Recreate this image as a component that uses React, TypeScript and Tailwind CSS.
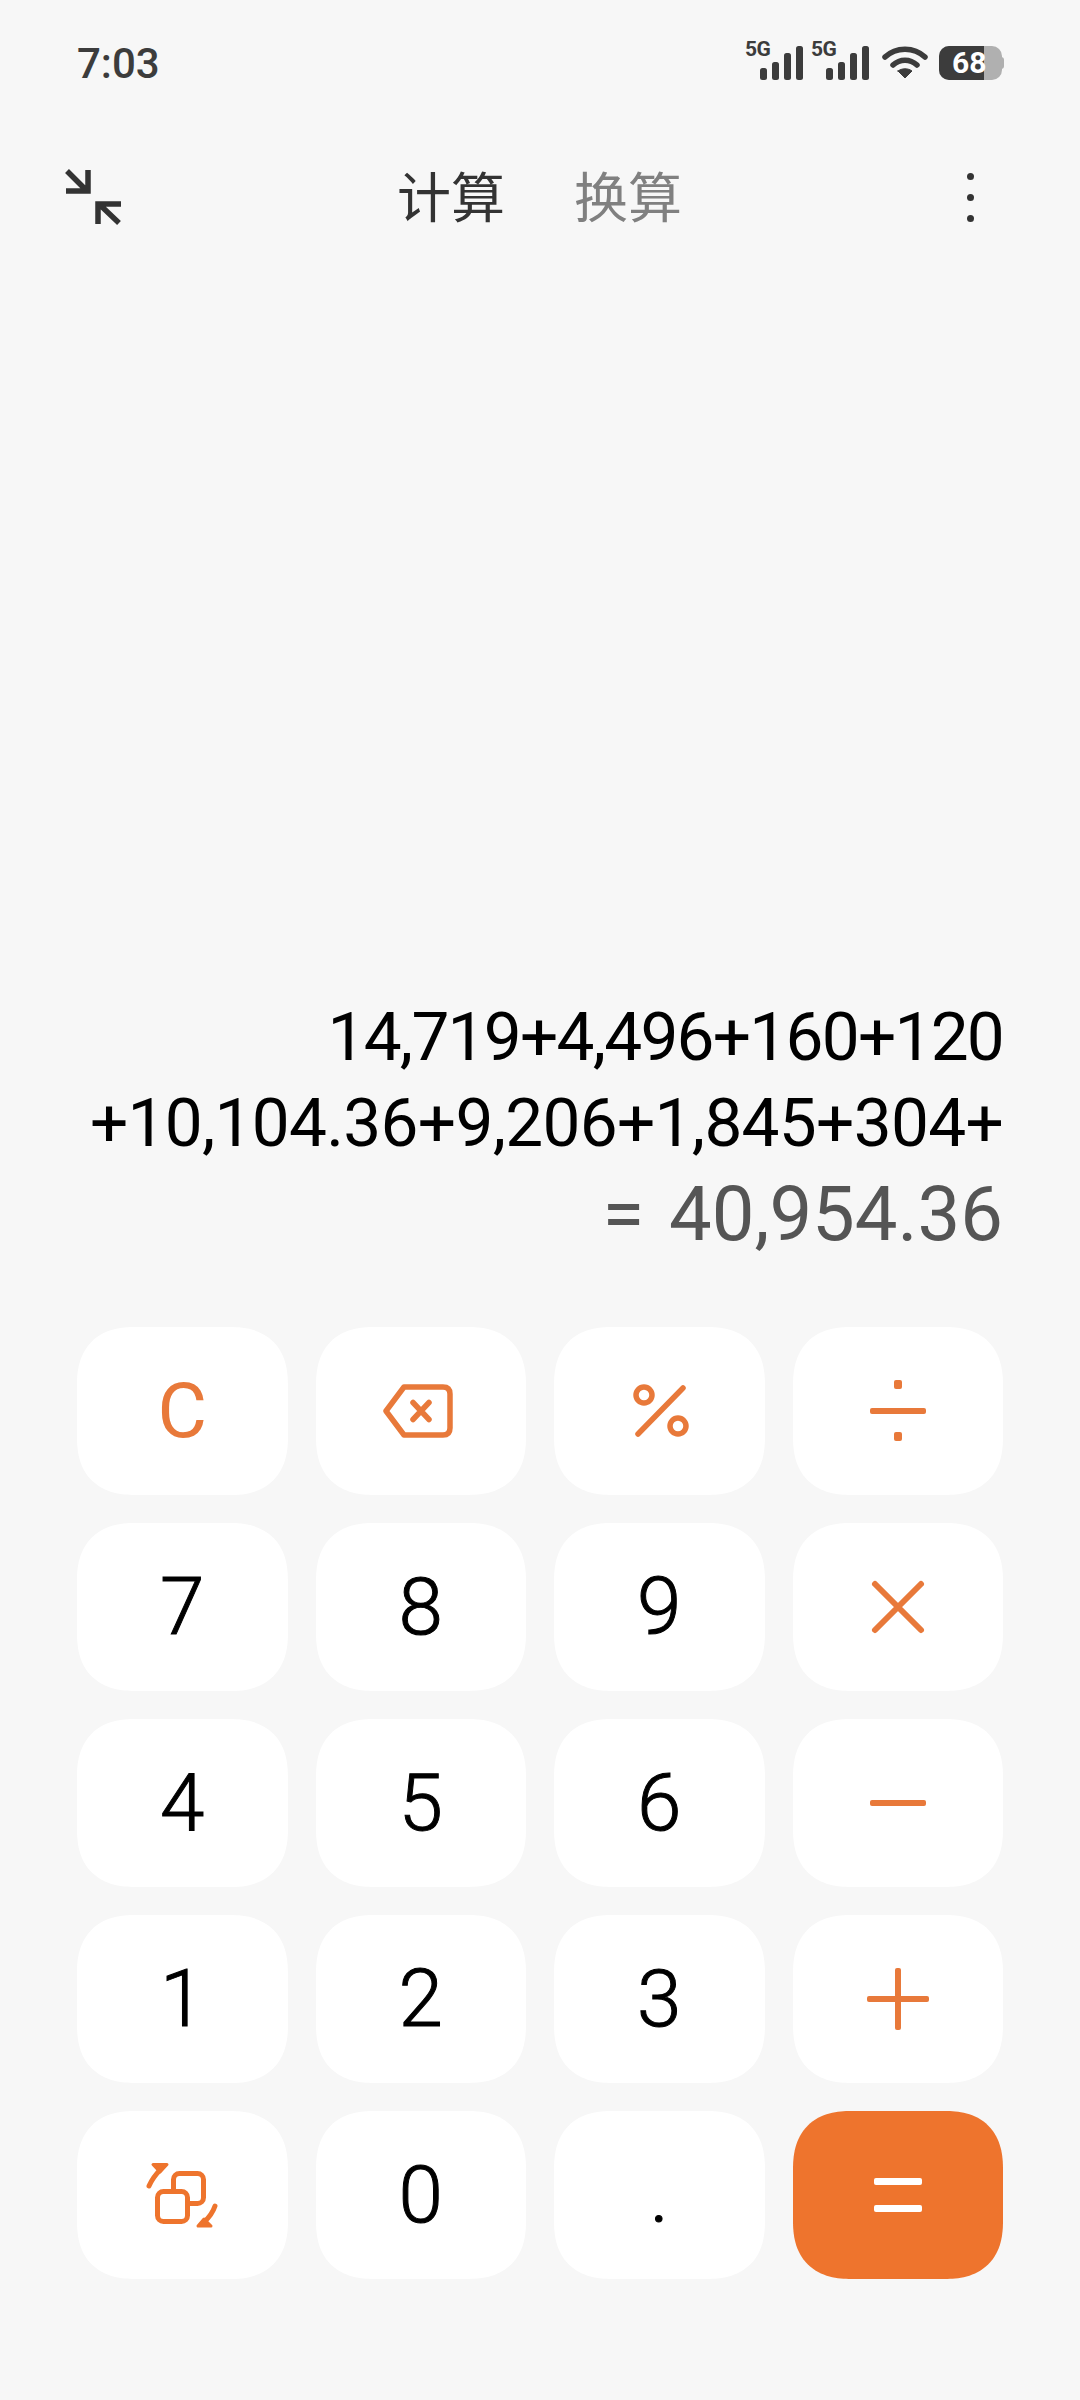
const font = "font-['Roboto','Noto_Sans_CJK_SC',sans-serif]";

function Compress() {
  return (
    <svg width="58" height="56" viewBox="0 0 58 56" fill="none" stroke="#333" strokeWidth="5.5">
      <path d="M3 2 L23 22 M24 1 V22 H2" />
      <path d="M55 54 L35 35 M34 55 V35 H57" />
    </svg>
  );
}

function Signal() {
  return (
    <div className="relative h-[38px] w-[60px]">
      <span className="absolute left-0 top-[-4px] text-[21px] font-bold leading-[22px] tracking-[-0.5px] text-[#3c3c3c]">5G</span>
      <svg width="60" height="38" viewBox="0 0 60 38" fill="#3c3c3c">
        <rect x="15" y="26" width="7" height="12" rx="2.5" />
        <rect x="27" y="20" width="7" height="18" rx="2.5" />
        <rect x="39" y="11" width="7" height="27" rx="2.5" />
        <rect x="51" y="4" width="7" height="34" rx="2.5" />
      </svg>
    </div>
  );
}

function Wifi() {
  return (
    <svg className="mb-[1px]" width="46" height="33" viewBox="0 0 46 33" fill="none" stroke="#3c3c3c" strokeWidth="5.5" strokeLinecap="round">
      <path d="M3 11 C14 0.5 32 0.5 43 11" />
      <path d="M11 19 C18 12.5 28 12.5 35 19" />
      <path d="M16 25 L23 32 L30 25 C26 22 20 22 16 25 Z" fill="#3c3c3c" strokeWidth="1" strokeLinejoin="round" />
    </svg>
  );
}

function Battery() {
  return (
    <div className="relative h-[34px] w-[65px]">
      <div className="h-[34px] w-[63px] overflow-hidden rounded-[10px] bg-[#b0b0b0]">
        <div className="h-full w-[45px] bg-[#3c3c3c]" />
      </div>
      <div className="absolute right-0 top-[11px] h-[12px] w-[3px] rounded-r-sm bg-[#b0b0b0]" />
      <span className="absolute left-[13px] top-0 text-[30px] font-bold leading-[34px] text-white">68</span>
    </div>
  );
}

function Key({ children, className = "bg-white" }: { children: React.ReactNode; className?: string }) {
  return (
    <div className={`flex h-[168px] items-center justify-center rounded-[58px] [corner-shape:superellipse(1.25)] ${className}`}>{children}</div>
  );
}

function Digit({ v }: { v: string }) {
  return (
    <Key>
      <span className="text-[80px] font-light leading-none text-black [-webkit-text-stroke:1px_black]">{v}</span>
    </Key>
  );
}

const orange = "#E8793A";

export default function App() {
  return (
    <div className={`${font} flex h-[2400px] w-[1080px] flex-col bg-[#f7f7f7]`}>
      <div className="mt-[42px] flex h-[38px] items-end justify-between pl-[77px] pr-[76px]">
        <span className="mb-[1px] text-[42px] font-medium leading-[30px] text-[#3c3c3c]">7:03</span>
        <div className="flex items-end">
          <div className="flex gap-[6px]"><Signal /><Signal /></div>
          <div className="ml-[11px] flex"><Wifi /></div>
          <div className="ml-[11px]"><Battery /></div>
        </div>
      </div>

      <div className="mt-[89px] flex h-[56px] items-center pl-[64px] pr-[106px]">
        <Compress />
        <div className="ml-[275px] mt-[5px] flex gap-[69px] text-[54px] leading-none">
          <span className="text-[#333]">计算</span>
          <span className="text-[#808080]">换算</span>
        </div>
        <div className="ml-auto flex flex-col gap-[14px]">
          <div className="h-[7px] w-[7px] rounded-full bg-[#333]" />
          <div className="h-[7px] w-[7px] rounded-full bg-[#333]" />
          <div className="h-[7px] w-[7px] rounded-full bg-[#333]" />
        </div>
      </div>

      <div className="flex flex-1 flex-col justify-end pb-[65px] pr-[77px] text-right">
        <div className="text-[67.5px] leading-[86px] tracking-[-1.75px] text-black">14,719+4,496+160+120</div>
        <div className="text-[67.5px] leading-[86px] tracking-[-0.7px] text-black">+10,104.36+9,206+1,845+304+</div>
        <div className="text-[76px] leading-[96px] text-[#555] [word-spacing:6px]">= 40,954.36</div>
      </div>

      <div className="grid grid-cols-4 gap-[28px] px-[77px] pb-[121px]">
        <Key><span className="text-[76px] leading-none" style={{ color: orange }}>C</span></Key>
        <Key>
          <svg className="mr-[5px]" width="70" height="54" viewBox="0 0 70 54" fill="none" stroke={orange} strokeWidth="5.5" strokeLinejoin="round" strokeLinecap="round">
            <path d="M21 3 H60 Q67 3 67 10 V44 Q67 51 60 51 H21 L3 27 Z" />
            <path d="M30 18.5 L46 35.5 M46 18.5 L30 35.5" />
          </svg>
        </Key>
        <Key>
          <svg className="ml-[4px]" role="img" aria-label="%" width="56" height="56" viewBox="0 0 56 56" fill="none" stroke={orange} strokeWidth="5.5" strokeLinecap="round">
            <circle cx="11" cy="12" r="8" />
            <circle cx="45" cy="43" r="8" />
            <path d="M5 51 L50 5" />
          </svg>
        </Key>
        <Key>
          <svg width="60" height="62" viewBox="0 0 60 62" fill={orange}>
            <rect x="2" y="28" width="56" height="6" rx="2" />
            <rect x="26" y="0" width="8" height="9" rx="2" />
            <rect x="26" y="52" width="8" height="9" rx="2" />
          </svg>
        </Key>

        <Digit v="7" /><Digit v="8" /><Digit v="9" />
        <Key>
          <svg width="56" height="56" viewBox="0 0 56 56" fill="none" stroke={orange} strokeWidth="6" strokeLinecap="round">
            <path d="M5 5 L51 51 M51 5 L5 51" />
          </svg>
        </Key>

        <Digit v="4" /><Digit v="5" /><Digit v="6" />
        <Key>
          <svg width="58" height="8" viewBox="0 0 58 8" fill={orange}>
            <rect x="1" y="1" width="56" height="6" rx="2" />
          </svg>
        </Key>

        <Digit v="1" /><Digit v="2" /><Digit v="3" />
        <Key>
          <svg width="64" height="64" viewBox="0 0 64 64" fill={orange}>
            <rect x="1" y="29" width="62" height="6" rx="2" />
            <rect x="29" y="1" width="6" height="62" rx="2" />
          </svg>
        </Key>

        <Key>
          <svg width="72" height="68" viewBox="0 0 72 68" fill="none" stroke="#EE742D" strokeWidth="5" strokeLinecap="round" strokeLinejoin="round">
            <rect x="27.5" y="12.5" width="30" height="30" rx="6" />
            <rect x="11.5" y="30.5" width="30" height="30" rx="6" fill="#fff" />
            <path d="M3 25 Q7 16 15 8" />
            <path d="M7 3.5 H21 L14 11 Z" fill="#EE742D" strokeWidth="3" />
            <path d="M69 45 Q66 54 58 61" />
            <path d="M52 65 H65 L58 58 Z" fill="#EE742D" strokeWidth="3" />
          </svg>
        </Key>
        <Digit v="0" />
        <Digit v="." />
        <Key className="bg-[#EE742D]">
          <svg width="50" height="36" viewBox="0 0 50 36" fill="#fff">
            <rect x="1" y="1" width="48" height="7" rx="2" />
            <rect x="1" y="28" width="48" height="7" rx="2" />
          </svg>
        </Key>
      </div>
    </div>
  );
}
